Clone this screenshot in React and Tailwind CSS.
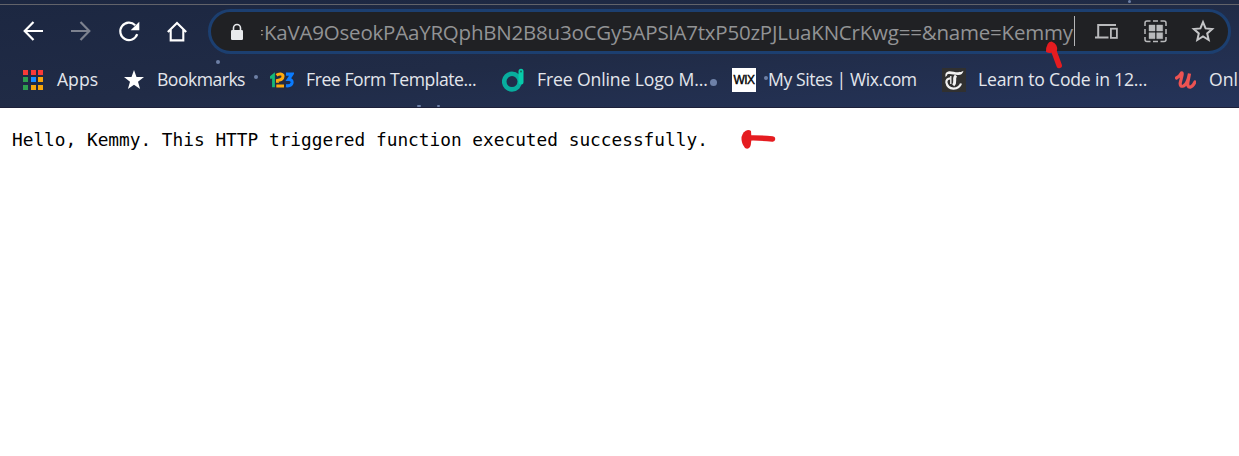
const Svg = ({ children, className = '', w = 24, h = 24 }) => (
  <svg width={w} height={h} viewBox={`0 0 ${w} ${h}`} fill="none" className={`block shrink-0 ${className}`}>{children}</svg>
);

const Arrow = () => <path d="M21 12H3M11.5 3L2.7 12L11.5 21" stroke="currentColor" strokeWidth="2.2" />;

const Dot = ({ className }) => <span className={`absolute rounded-full bg-[#8fa5cf] opacity-70 blur-[0.6px] ${className}`} />;

const appColors = ['#f93a37', '#f93a37', '#f93a37', '#2e9f50', '#1a8cff', '#f5a50a', '#2e9f50', '#f5a50a', '#f5a50a'];

function Toolbar() {
  return (
    <div className="flex h-[44px] items-center text-white">
      <Svg className="ml-[22px]"><Arrow /></Svg>
      <Svg className="ml-6 text-[#7d828f]"><g transform="matrix(-1 0 0 1 22 0)"><Arrow /></g></Svg>
      <Svg className="ml-[23px]">
        <path d="M18.2 6.2A8.7 8.7 0 1 0 20.2 15.2" stroke="currentColor" strokeWidth="2.2" />
        <path d="M22.3 2.8V11.2H13.7Z" fill="currentColor" />
      </Svg>
      <Svg className="ml-6">
        <path d="M2.8 12.9L12 4L21.2 12.9M5.7 10.5V21.4H18.3V10.5" stroke="currentColor" strokeWidth="2.1" />
      </Svg>
      <div className="ml-[19px] flex h-[45px] w-[1023px] shrink-0 items-center rounded-full border-[3px] border-[#1c3f70] bg-[#202124]">
        <Svg w={14} h={18} className="ml-[19px] mt-0.5">
          <rect x="1" y="7" width="12" height="10" rx="1.2" fill="#e8eaed" />
          <path d="M3.5 8V5A3.5 3.5 0 0 1 10.5 5V8" stroke="#e8eaed" strokeWidth="1.6" />
        </Svg>
        <div className="ml-[15px] flex h-[30px] w-[816px] shrink-0 items-center overflow-hidden border-r border-[#b5b6b8] pt-[3px] font-['Open_Sans',sans-serif] text-[20.5px] text-[#929395]">
          <span className="ml-[2px] flex w-[3px] justify-end overflow-hidden">=</span>
          <span className="whitespace-nowrap tracking-[-0.21px]">KaVA9OseokPAaYRQphBN2B8u3oCGy5APSlA7txP50zPJLuaKNCrKwg==&amp;name=Kemmy</span>
        </div>
        <Svg className="ml-[19px] text-[#b9babc]">
          <path d="M22 6H4.2V17.5M1 18.6H14.5" stroke="currentColor" strokeWidth="2" />
          <rect x="16.9" y="9.7" width="6" height="9.2" stroke="currentColor" strokeWidth="1.8" />
        </Svg>
        <Svg className="ml-[26px] text-[#b9babc]">
          <g transform="translate(0 1)">
            <path d="M1 6V3A2 2 0 0 1 3 1H6.5M9 1H14M16.5 1H20A2 2 0 0 1 22 3V6M22 9V14M22 17V19.5A2 2 0 0 1 20 21.5H16.5M14 21.5H9M6.5 21.5H3A2 2 0 0 1 1 19.5V17M1 14V9" stroke="currentColor" strokeWidth="1.5" />
            <path d="M5 5h6v6H5zM12.7 5h6v6h-6zM5 12.7h6v6H5zM12.7 12.7h6v6h-6z" fill="currentColor" stroke="currentColor" strokeWidth=".4" strokeLinejoin="round" />
          </g>
        </Svg>
        <Svg className="ml-[23px] text-[#c5c6c8]">
          <path d="M12 3.2L14.6 9.4L21.2 10L16.2 14.4L17.7 21L12 17.5L6.3 21L7.8 14.4L2.8 10L9.4 9.4Z" stroke="currentColor" strokeWidth="2" />
        </Svg>
      </div>
    </div>
  );
}

function Bookmarks() {
  return (
    <div className="relative flex h-[54px] items-center overflow-hidden whitespace-nowrap pb-px font-['Open_Sans',sans-serif] text-[17.6px] text-[#e3e6ec]">
      <div className="ml-[23px] grid w-5 shrink-0 grid-cols-[5px_5px_5px] gap-[2.5px]">
        {appColors.map((c, i) => <span key={i} className="h-[5px]" style={{ background: c }} />)}
      </div>
      <span className="ml-[14px] w-[67px] shrink-0">Apps</span>
      <Svg w={20} h={20} className="text-white"><path d="M10 0L12.5 7H20L14 11.8L16.1 19L10 14.8L3.9 19L6 11.8L0 7H7.5Z" fill="currentColor" /></Svg>
      <span className="ml-[13px] w-[113px] shrink-0 tracking-[-0.52px]">Bookmarks</span>
      <Svg w={24} h={16}>
        <path d="M0 6.2L3.5 3.2V15.3" stroke="#14b978" strokeWidth="2.8" />
        <path d="M16 2.2H22L18.5 7.3Q22.5 7.3 22 11Q21.2 14.4 16 13.7" stroke="#0a7bff" strokeWidth="3.2" />
        <path d="M6.5 3.2Q8.3 1.8 10.7 2Q14 2.4 12.6 6Q11.5 8 7.5 8.5V10.8M6.3 14H14" stroke="#ffaa0c" strokeWidth="3.1" />
      </Svg>
      <span className="ml-[12px] w-[196px] shrink-0 tracking-[-0.43px]">Free Form Template...</span>
      <Svg w={24} h={24}>
        <circle cx="10" cy="13.6" r="7.8" stroke="#08ad9e" strokeWidth="4.6" />
        <path d="M19 3.2V14" stroke="#07cbaa" strokeWidth="5" strokeLinecap="round" />
        <circle cx="19" cy="3.5" r="1" fill="#16705f" />
      </Svg>
      <span className="ml-[11px] w-[195px] shrink-0 tracking-[-0.13px]">Free Online Logo M...</span>
      <span className="flex h-6 w-6 shrink-0 items-center justify-center bg-white font-['Liberation_Sans',sans-serif] text-[12px] tracking-[-0.6px] text-black [-webkit-text-stroke:0.4px_black]">WIX</span>
      <span className="ml-[12px] w-[174px] shrink-0 tracking-[-0.43px]">My Sites | Wix.com</span>
      <Svg className="bg-[#303030] text-[#f2f2f2]">
        <path d="M3.5 9Q2.5 4 7 3.2C11 2.8 16 6 21.5 2.8Q20.5 7.2 16 7C11 6.8 5 4.5 5 7.6Z" fill="currentColor" />
        <path d="M8.5 10.3Q4 10.5 4.4 14.5Q5.5 20.3 11.5 20.6Q17.5 20.3 19 15.5" stroke="currentColor" strokeWidth="2.2" />
        <path d="M14 7.5Q12.3 9 12.7 12.5Q13 15.5 11.2 17.3" stroke="currentColor" strokeWidth="3" />
        <path d="M8.8 8V16" stroke="currentColor" strokeWidth="1.3" />
      </Svg>
      <span className="ml-[12px] w-[197px] shrink-0 tracking-[-0.2px]">Learn to Code in 12...</span>
      <Svg w={21} h={20}>
        <path d="M1.5 8Q5 6 6.5 3Q7.5 2.5 7 5.5L5.2 13Q4.8 17 8.5 16Q12.5 14 14.5 3.5L13 11.5Q12 17.5 15.2 17.2Q18 16.5 20 12" stroke="#ed5352" strokeWidth="3.2" strokeLinecap="round" />
      </Svg>
      <span className="ml-[13px] shrink-0">Online</span>
      <Dot className="left-[216px] top-[7px] size-[4px]" />
      <Dot className="left-[254px] top-[22px] size-[4px]" />
      <Dot className="left-[710px] top-[26px] size-[7px]" />
      <Dot className="left-[764px] top-[23px] size-[4px]" />
      <Dot className="left-[417px] top-[52px] h-[2px] w-[4px]" />
      <Dot className="left-[437px] top-[52px] h-[2px] w-[3px]" />
    </div>
  );
}

export default function App() {
  return (
    <main className="relative h-[456px] w-[1239px] overflow-hidden bg-white">
      <header className="flex h-[108px] flex-col border-b border-[#1d2039] bg-gradient-to-br from-[#1c2741] via-[#202b46] to-[#25345a]">
        <div className="mb-[4px] h-[5px] shrink-0 border-b border-[#62636a]" />
        <Toolbar />
        <Bookmarks />
      </header>
      <pre className="ml-[12px] mt-[18px] flex h-7 items-center font-['DejaVu_Sans_Mono',monospace] text-[17.8px] text-black">Hello, Kemmy. This HTTP triggered function executed successfully.</pre>
      <Dot className="left-[1128px] top-0 size-[3px]" />
      <svg width="20" height="32" viewBox="0 0 20 32" className="absolute left-[1043px] top-[39px]" fill="none">
        <path d="M8.5 2.5Q3 3 3 13Q8 15.5 14 11.5Q15 5 8.5 2.5Z" fill="#e51c20" />
        <path d="M9 7L16.2 26.5" stroke="#e51c20" strokeWidth="5.5" strokeLinecap="round" />
      </svg>
      <svg width="36" height="22" viewBox="0 0 36 22" className="absolute left-[740px] top-[129px]" fill="none">
        <path d="M8 1Q3 2 1.5 8Q1 14 5 19Q8 21 10 18Q12 14 11 2Q10 1 8 1Z" fill="#e51c20" />
        <path d="M8 9Q18 8.5 32.5 10" stroke="#e51c20" strokeWidth="5.5" strokeLinecap="round" />
      </svg>
    </main>
  );
}
